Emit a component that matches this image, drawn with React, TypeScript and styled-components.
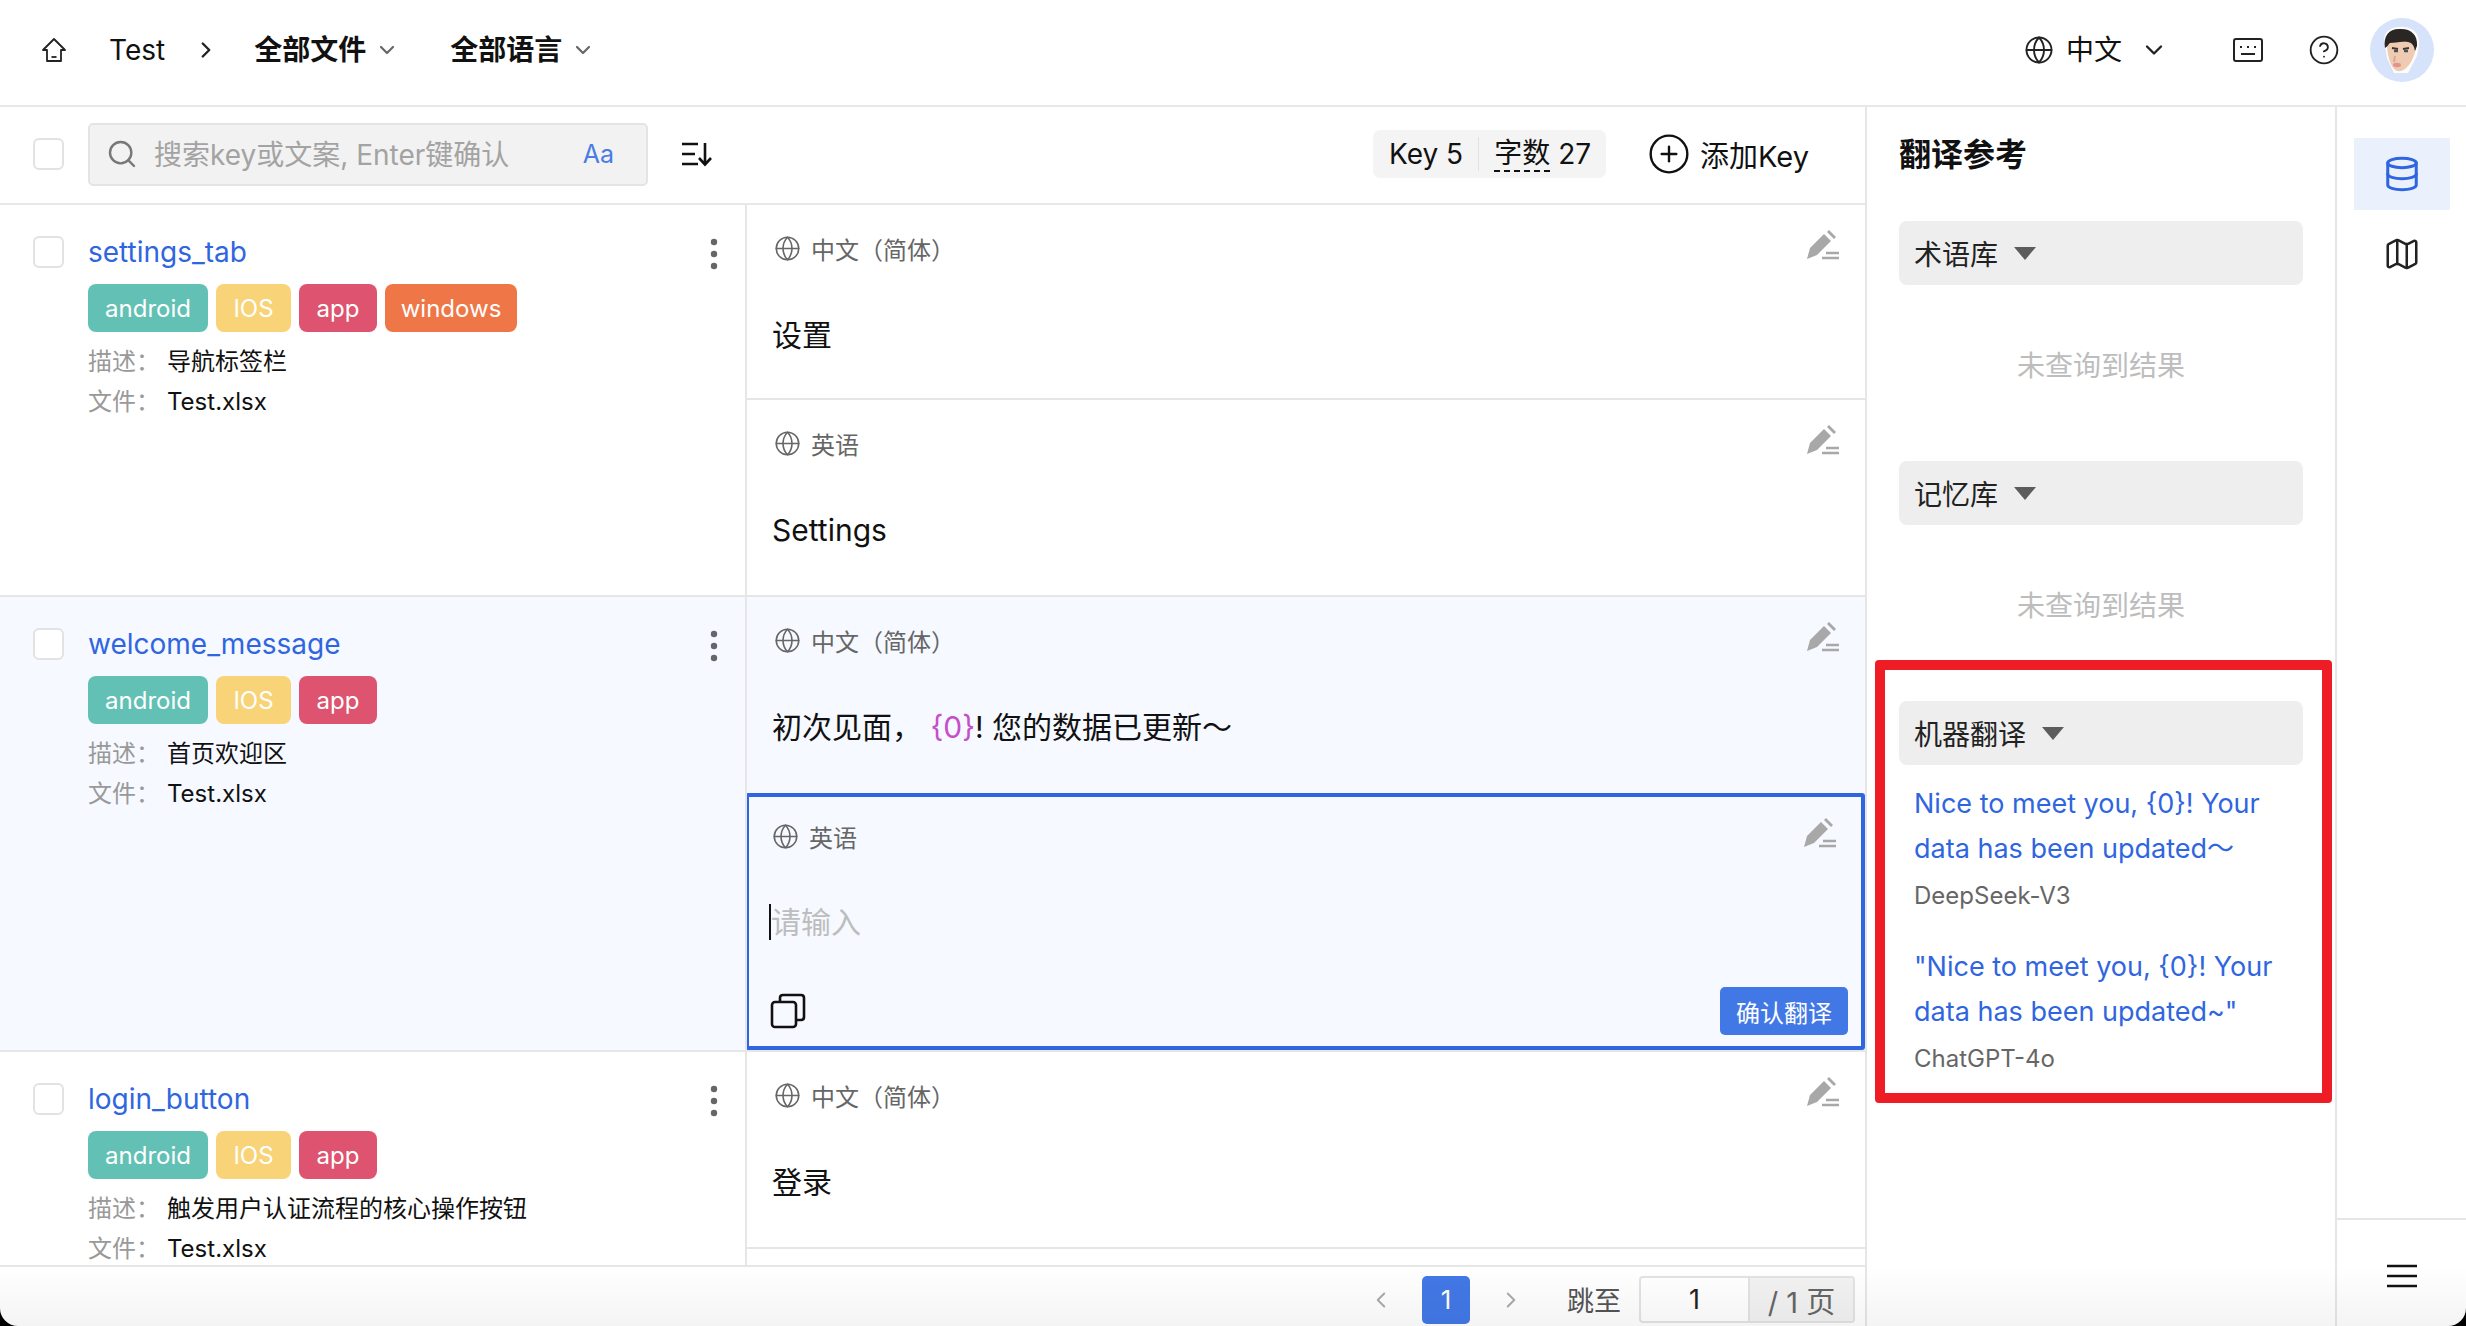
import React from "react";
import styled, { createGlobalStyle } from "styled-components";
import { ChevronDown, ChevronLeft, ChevronRight, CirclePlus, CircleHelp, Database, Globe, Map as MapIcon, Search } from "lucide-react";

const Global = createGlobalStyle`
  html, body { margin: 0; padding: 0; height: 100%; background: #000; overflow: hidden; }
  body { font-family: Inter, "Noto Sans CJK SC", sans-serif; color: #111; }
  #root { height: 100%; }
  * { box-sizing: border-box; }
`;

const Shell = styled.div`
  position: relative;
  width: 100%;
  height: 100vh;
  background: #fff;
  border-radius: 0 0 18px 18px;
  overflow: hidden;
  display: flex;
  flex-direction: column;
`;
const BottomShade = styled.div`
  position: absolute;
  left: 0;
  right: 0;
  bottom: 0;
  height: 60px;
  background: linear-gradient(to bottom, rgba(0,0,0,0), rgba(0,0,0,0.045));
  pointer-events: none;
`;

const Header = styled.header`
  flex: 0 0 107px;
  border-bottom: 2px solid #e8e8e8;
  display: flex;
  align-items: center;
  padding: 0 32px 5px 41px;
`;
const HeaderGroup = styled.div`
  display: flex;
  align-items: center;
`;
const Spacer = styled.div`flex: 1;`;
const Crumb = styled.span<{ $ml: number; $bold?: boolean }>`
  margin-left: ${p => p.$ml}px;
  font-size: 28px;
  line-height: 40px;
  font-weight: ${p => (p.$bold ? 600 : 400)};
  color: #111;
  white-space: nowrap;
`;
const TinyChevron = styled(ChevronDown)`
  margin-left: 9px;
  color: #666;
`;

const Body = styled.div`
  flex: 1;
  min-height: 0;
  display: flex;
`;
const Main = styled.main`
  width: 1865px;
  display: flex;
  flex-direction: column;
  min-height: 0;
`;

const Toolbar = styled.div`
  flex: 0 0 98px;
  border-bottom: 2px solid #e8e8e8;
  display: flex;
  align-items: center;
  padding: 0 0 2px 33px;
`;
const Check = styled.span`
  flex: 0 0 31px;
  width: 31px;
  height: 32px;
  background: #fff;
  border: 2px solid #e2e2e2;
  border-radius: 6px;
`;
const SearchBox = styled.div`
  margin-left: 24px;
  width: 560px;
  height: 63px;
  background: #f2f2f2;
  border: 2px solid #e4e4e4;
  border-radius: 5px;
  display: flex;
  align-items: center;
  padding: 0 32px 0 16px;
  color: #777;
`;
const SearchHint = styled.span`
  flex: 1;
  margin: -2px 0 0 16px;
  font-size: 28px;
  color: #a3a3a3;
  white-space: nowrap;
`;
const CaseToggle = styled.span`
  font-size: 25px;
  color: #4a7ce6;
`;
const SortIcon = styled.svg`
  margin-left: 33px;
  flex: none;
`;
const StatBadge = styled.div`
  margin-left: auto;
  margin-right: -1px;
  height: 48px;
  width: 233px;
  background: #f4f4f4;
  border-radius: 7px;
  display: flex;
  align-items: center;
  padding-left: 16px;
  font-size: 28px;
  white-space: nowrap;
`;
const StatDivider = styled.span`
  width: 1px;
  height: 34px;
  background: #e2e2e2;
  margin: 0 15px 0 15px;
`;
const Dotted = styled.span`
  border-bottom: 2px dashed #111;
  line-height: 34px;
  margin-right: 8px;
`;
const AddKey = styled.div`
  margin-left: 42px;
  margin-right: 56px;
  display: flex;
  align-items: center;
  gap: 9px;
  font-size: 29px;
  white-space: nowrap;
`;

const List = styled.div`
  flex: 1;
  min-height: 0;
  overflow: hidden;
`;
const Row = styled.section<{ $active?: boolean; $h: number }>`
  display: flex;
  height: ${p => p.$h}px;
  background: ${p => (p.$active ? "#f6f9ff" : "#fff")};
  border-bottom: 2px solid #e6e6e6;
`;
const KeyColumn = styled.div`
  position: relative;
  flex: 0 0 747px;
  border-right: 2px solid #e6e6e6;
  display: flex;
  gap: 24px;
  padding: 31px 0 0 33px;
`;
const KeyInfo = styled.div`
  display: flex;
  flex-direction: column;
  align-items: flex-start;
`;
const KeyName = styled.div`
  font-size: 28px;
  line-height: 32px;
  color: #2f66e0;
`;
const Tags = styled.div`
  display: flex;
  gap: 8px;
  margin: 16px 0 10px;
`;
const Tag = styled.span<{ $bg: string; $w: number }>`
  width: ${p => p.$w}px;
  height: 48px;
  border-radius: 8px;
  background: ${p => p.$bg};
  color: #fff;
  font-size: 24px;
  display: flex;
  align-items: center;
  justify-content: center;
`;
const Meta = styled.div`
  display: flex;
  font-size: 24px;
  line-height: 40px;
  white-space: nowrap;
`;
const MetaLabel = styled.span`
  width: 79px;
  color: #999;
`;
const MetaValue = styled.span`color: #111;`;
const Kebab = styled.svg`
  position: absolute;
  right: 26px;
  top: 32px;
`;

const CellColumn = styled.div`
  flex: 1;
  min-width: 0;
  display: flex;
  flex-direction: column;
`;
const Cell = styled.div<{ $h: number; $focus?: boolean; $divided?: boolean }>`
  flex: 0 0 ${p => p.$h}px;
  height: ${p => p.$h}px;
  padding: ${p => (p.$focus ? "23px 13px 0 21px" : "27px 14px 0 25px")};
  margin-left: ${p => (p.$focus ? "-2px" : "0")};
  border: ${p => (p.$focus ? "4px solid #2f66e0" : "none")};
  border-radius: ${p => (p.$focus ? "3px" : "0")};
  border-bottom: ${p => (p.$focus ? "4px solid #2f66e0" : p.$divided ? "2px solid #e6e6e6" : "none")};
  display: flex;
  flex-direction: column;
`;
const CellHead = styled.div`
  height: 32px;
  display: flex;
  align-items: center;
  gap: 10px;
  padding: 0 11px 0 2px;
  color: #666;
  font-size: 24px;
  white-space: nowrap;
`;
const EditIcon = styled.svg`
  margin-left: auto;
  margin-top: -6px;
`;
const CellText = styled.div`
  margin-top: 49px;
  font-size: 30px;
  line-height: 44px;
  color: #111;
  white-space: nowrap;
`;
const Placeholder = styled.div`
  margin-top: 52px;
  margin-left: -1px;
  height: 36px;
  font-size: 30px;
  line-height: 36px;
  color: #bdbdbd;
  border-left: 2px solid #111;
  white-space: nowrap;
`;
const Token = styled.span`color: #c44fc9;`;
const CellFoot = styled.div`
  margin-top: auto;
  margin-bottom: 11px;
  display: flex;
  align-items: center;
  justify-content: space-between;
`;
const ConfirmButton = styled.button`
  width: 128px;
  height: 48px;
  padding: 0;
  border: 0;
  border-radius: 5px;
  background: #4278e6;
  color: #fff;
  font: inherit;
  font-size: 24px;
`;

const Footer = styled.footer`
  flex: 0 0 61px;
  border-top: 2px solid #e6e6e6;
  display: flex;
  align-items: center;
  justify-content: flex-end;
  padding: 6px 10px 0 0;
`;
const PageArrow = styled.span<{ $ml: number }>`
  margin-left: ${p => p.$ml}px;
  color: #aaa;
  display: flex;
`;
const PageCurrent = styled.span`
  margin-left: 28px;
  width: 48px;
  height: 48px;
  border-radius: 5px;
  background: #4278e6;
  color: #fff;
  font-size: 26px;
  display: flex;
  align-items: center;
  justify-content: center;
`;
const JumpLabel = styled.span`
  margin-left: 43px;
  font-size: 27px;
  color: #555;
  white-space: nowrap;
`;
const JumpBox = styled.div`
  margin-left: 18px;
  width: 216px;
  height: 47px;
  border: 2px solid #e3e3e3;
  border-radius: 4px;
  display: flex;
  font-size: 27px;
  background: #fff;
  overflow: hidden;
`;
const JumpInput = styled.span`
  width: 109px;
  display: flex;
  align-items: center;
  justify-content: center;
  color: #222;
  border-right: 2px solid #e3e3e3;
`;
const JumpTotal = styled.span`
  flex: 1;
  display: flex;
  align-items: center;
  justify-content: center;
  color: #666;
  background: #f2f2f2;
  font-size: 29px;
  white-space: nowrap;
`;

const RefPanel = styled.aside`
  position: relative;
  flex: 0 0 472px;
  border-left: 2px solid #e6e6e6;
  border-right: 2px solid #e6e6e6;
  padding: 28px 32px 0;
`;
const RefTitle = styled.h2`
  margin: 0 0 46px;
  font-size: 32px;
  line-height: 40px;
  font-weight: 700;
`;
const SectionHead = styled.div`
  height: 64px;
  border-radius: 8px;
  background: #eee;
  display: flex;
  align-items: center;
  padding-left: 15px;
  font-size: 28px;
  color: #222;
`;
const Caret = styled.span`
  margin-left: 16px;
  width: 0;
  height: 0;
  border-left: 11px solid transparent;
  border-right: 11px solid transparent;
  border-top: 13px solid #5c5c5c;
`;
const EmptyNote = styled.div`
  height: 176px;
  padding-top: 61px;
  text-align: center;
  font-size: 28px;
  line-height: 40px;
  color: #bdbdbd;
`;
const Results = styled.div`
  padding: 16px 15px 0;
`;
const Suggestion = styled.div`
  margin-bottom: 28px;
`;
const SuggestionText = styled.div`
  font-size: 27px;
  line-height: 45px;
  color: #2f66e0;
`;
const Engine = styled.div`
  margin-top: 5px;
  font-size: 24px;
  line-height: 40px;
  color: #666;
`;
const Highlight = styled.div`
  position: absolute;
  left: 8px;
  top: 553px;
  width: 457px;
  height: 443px;
  border: 10px solid #ee1c25;
  border-radius: 4px;
  pointer-events: none;
`;

const Rail = styled.nav`
  flex: 1;
  display: flex;
  flex-direction: column;
  align-items: center;
`;
const RailButton = styled.div<{ $active?: boolean }>`
  width: 96px;
  height: 72px;
  margin-top: ${p => (p.$active ? "31px" : "8px")};
  background: ${p => (p.$active ? "#eaf1fd" : "transparent")};
  color: ${p => (p.$active ? "#2f66e0" : "#222")};
  display: flex;
  align-items: center;
  justify-content: center;
`;
const RailFoot = styled.div`
  margin-top: auto;
  width: 100%;
  height: 108px;
  border-top: 2px solid #e6e6e6;
  display: flex;
  justify-content: center;
  padding-top: 44px;
`;

const Edit = () => (
  <EditIcon width="34" height="30" viewBox="0 0 34 30">
    <path d="M1 29 L4 18 L18 4 L25 11 L11 25 Z" fill="#a8a8a8" />
    <path d="M21 2 L23 0 L30 7 L28 9 Z" fill="#a8a8a8" />
    <path d="M20 23 H33 M16 28 H33" stroke="#a8a8a8" strokeWidth="2.4" />
  </EditIcon>
);

const CellHeader = ({ label }: { label: string }) => (
  <CellHead>
    <Globe size={27} strokeWidth={1.4} color="#666" />
    {label}
    <Edit />
  </CellHead>
);

const tagDefs: Record<string, { bg: string; w: number }> = {
  android: { bg: "#62c1b4", w: 120 },
  IOS: { bg: "#f9d377", w: 75 },
  app: { bg: "#dd5370", w: 78 },
  windows: { bg: "#ef7646", w: 132 },
};

const KeyCol = ({ name, tags, desc }: { name: string; tags: string[]; desc: string }) => (
  <KeyColumn>
    <Check />
    <KeyInfo>
      <KeyName>{name}</KeyName>
      <Tags>
        {tags.map(t => (
          <Tag key={t} $bg={tagDefs[t].bg} $w={tagDefs[t].w}>{t}</Tag>
        ))}
      </Tags>
      <Meta><MetaLabel>描述：</MetaLabel><MetaValue>{desc}</MetaValue></Meta>
      <Meta><MetaLabel>文件：</MetaLabel><MetaValue>Test.xlsx</MetaValue></Meta>
    </KeyInfo>
    <Kebab width="10" height="34" viewBox="0 0 10 34">
      <circle cx="5" cy="5" r="3.2" fill="#666" />
      <circle cx="5" cy="17" r="3.2" fill="#666" />
      <circle cx="5" cy="29" r="3.2" fill="#666" />
    </Kebab>
  </KeyColumn>
);

const Face = () => (
  <svg width="64" height="64" viewBox="0 0 64 64" style={{ marginLeft: 30 }}>
    <circle cx="32" cy="32" r="32" fill="#d6e3fb" />
    <path d="M14 22 C14 12 24 8 34 9 C44 10 50 16 49 28 L47 38 L38 55 L24 55 L17 40 Z" fill="#fdfcfa" />
    <path d="M17 28 C18 42 22 51 27 53 C33 54 37 50 41 44 C44 38 46 32 46 28 L38 24 L22 24 Z" fill="#efcbb2" />
    <path d="M15 30 C13 18 19 11 29 11 C40 10 48 16 47 28 C46 30 46 31 45 33 C44 27 42 25 38 24 C31 23 24 25 20 25 C18 27 17 29 15 30 Z" fill="#2a2624" />
    <path d="M22 30 L28 31 M33 31 L39 30" stroke="#3a3634" strokeWidth="1.8" />
    <path d="M24 33 H28 M34 33 H38" stroke="#4b5358" strokeWidth="2.4" />
    <path d="M25 38 L24 44" stroke="#dca98e" strokeWidth="2" />
    <ellipse cx="27" cy="47" rx="4" ry="2.2" fill="#e4928a" />
  </svg>
);

export default function App() {
  return (
    <Shell>
      <Global />
      <Header>
        <HeaderGroup>
          <svg width="26" height="26" viewBox="0 0 26 26" fill="none" stroke="#222" strokeWidth="1.8" strokeLinejoin="round">
            <path d="M13 2 L2 13 H6 V24 H20 V13 H24 Z" />
            <path d="M10.5 20 H15.5" />
          </svg>
          <Crumb $ml={42}>Test</Crumb>
          <ChevronRight size={26} strokeWidth={2.2} color="#222" style={{ marginLeft: 28 }} />
          <Crumb $ml={35} $bold>全部文件</Crumb>
          <TinyChevron size={24} strokeWidth={2.2} />
          <Crumb $ml={51} $bold>全部语言</Crumb>
          <TinyChevron size={24} strokeWidth={2.2} />
        </HeaderGroup>
        <Spacer />
        <HeaderGroup>
          <Globe size={30} strokeWidth={1.5} color="#222" />
          <Crumb $ml={12}>中文</Crumb>
          <ChevronDown size={28} strokeWidth={2} color="#222" style={{ marginLeft: 18 }} />
          <svg width="30" height="24" viewBox="0 0 30 24" fill="none" stroke="#222" strokeWidth="2" style={{ marginLeft: 65 }}>
            <rect x="1" y="1" width="28" height="22" rx="2" />
            <path d="M7 9 H9 M14 9 H16 M21 9 H23 M8 16 H22" />
          </svg>
          <CircleHelp size={32} strokeWidth={1.4} color="#222" style={{ marginLeft: 45 }} />
          <Face />
        </HeaderGroup>
      </Header>
      <Body>
        <Main>
          <Toolbar>
            <Check />
            <SearchBox>
              <Search size={32} strokeWidth={1.8} />
              <SearchHint>搜索key或文案, Enter键确认</SearchHint>
              <CaseToggle>Aa</CaseToggle>
            </SearchBox>
            <SortIcon width="32" height="26" viewBox="0 0 32 26" fill="none" stroke="#111" strokeWidth="2.6">
              <path d="M1 3 H17 M1 13 H14 M1 23 H17" />
              <path d="M24 2 V23 M18 17 L24 23.5 L30 17" />
            </SortIcon>
            <StatBadge>
              Key 5
              <StatDivider />
              <Dotted>字数</Dotted>27
            </StatBadge>
            <AddKey>
              <CirclePlus size={44} strokeWidth={1.3} color="#111" />
              添加Key
            </AddKey>
          </Toolbar>
          <List>
            <Row $h={392}>
              <KeyCol name="settings_tab" tags={["android", "IOS", "app", "windows"]} desc="导航标签栏" />
              <CellColumn>
                <Cell $h={195} $divided>
                  <CellHeader label="中文（简体）" />
                  <CellText>设置</CellText>
                </Cell>
                <Cell $h={195}>
                  <CellHeader label="英语" />
                  <CellText>Settings</CellText>
                </Cell>
              </CellColumn>
            </Row>
            <Row $h={455} $active>
              <KeyCol name="welcome_message" tags={["android", "IOS", "app"]} desc="首页欢迎区" />
              <CellColumn>
                <Cell $h={196}>
                  <CellHeader label="中文（简体）" />
                  <CellText>初次见面， <Token>{"{0}"}</Token>! 您的数据已更新～</CellText>
                </Cell>
                <Cell $h={257} $focus>
                  <CellHeader label="英语" />
                  <Placeholder>请输入</Placeholder>
                  <CellFoot>
                    <svg width="36" height="36" viewBox="0 0 36 36" fill="none" stroke="#111" strokeWidth="2.6">
                      <rect x="2" y="9" width="24" height="25" rx="3" />
                      <path d="M10 9 V5 Q10 2 13 2 H31 Q34 2 34 5 V24 Q34 27 31 27 H26" />
                    </svg>
                    <ConfirmButton>确认翻译</ConfirmButton>
                  </CellFoot>
                </Cell>
              </CellColumn>
            </Row>
            <Row $h={392}>
              <KeyCol name="login_button" tags={["android", "IOS", "app"]} desc="触发用户认证流程的核心操作按钮" />
              <CellColumn>
                <Cell $h={197} $divided>
                  <CellHeader label="中文（简体）" />
                  <CellText>登录</CellText>
                </Cell>
                <Cell $h={193}>
                  <CellHeader label="英语" />
                </Cell>
              </CellColumn>
            </Row>
          </List>
          <Footer>
            <PageArrow $ml={0}><ChevronLeft size={26} strokeWidth={1.8} /></PageArrow>
            <PageCurrent>1</PageCurrent>
            <PageArrow $ml={28}><ChevronRight size={26} strokeWidth={1.8} /></PageArrow>
            <JumpLabel>跳至</JumpLabel>
            <JumpBox>
              <JumpInput>1</JumpInput>
              <JumpTotal>/ 1 页</JumpTotal>
            </JumpBox>
          </Footer>
        </Main>
        <RefPanel>
          <RefTitle>翻译参考</RefTitle>
          <SectionHead>术语库<Caret /></SectionHead>
          <EmptyNote>未查询到结果</EmptyNote>
          <SectionHead>记忆库<Caret /></SectionHead>
          <EmptyNote>未查询到结果</EmptyNote>
          <SectionHead>机器翻译<Caret /></SectionHead>
          <Results>
            <Suggestion>
              <SuggestionText>Nice to meet you, {"{0}"}! Your data has been updated～</SuggestionText>
              <Engine>DeepSeek-V3</Engine>
            </Suggestion>
            <Suggestion>
              <SuggestionText>"Nice to meet you, {"{0}"}! Your data has been updated~"</SuggestionText>
              <Engine>ChatGPT-4o</Engine>
            </Suggestion>
          </Results>
          <Highlight />
        </RefPanel>
        <Rail>
          <RailButton $active><Database size={38} strokeWidth={1.9} /></RailButton>
          <RailButton><MapIcon size={38} strokeWidth={1.6} /></RailButton>
          <RailFoot>
            <svg width="32" height="24" viewBox="0 0 32 24" stroke="#111" strokeWidth="2.4">
              <path d="M1 2 H31 M1 12 H31 M1 22 H31" />
            </svg>
          </RailFoot>
        </Rail>
      </Body>
      <BottomShade />
    </Shell>
  );
}
